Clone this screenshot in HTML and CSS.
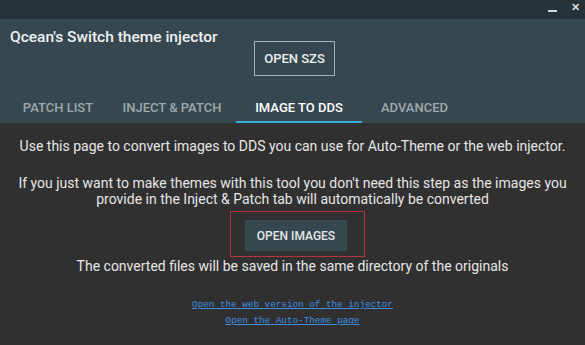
FILE: index.html
```html
<!DOCTYPE html>
<html lang="en">
<head>
    <meta charset="UTF-8">
    <title>Qcean's Switch theme injector</title>
    <link rel="stylesheet" href="styles.css">
</head>
<body>
    <div class="app">
        <div class="titlebar">
            <span class="win-btn minimize"></span>
            <span class="win-btn close">&#10005;</span>
        </div>

        <header class="header">
            <div class="top-row">
                <h1 class="app-title">Qcean's Switch theme injector</h1>
                <button class="outline-btn">OPEN SZS</button>
            </div>
            <nav class="tabs">
                <div class="tab">PATCH LIST</div>
                <div class="tab">INJECT &amp; PATCH</div>
                <div class="tab active">IMAGE TO DDS</div>
                <div class="tab">ADVANCED</div>
            </nav>
        </header>

        <main class="content">
            <p class="intro">Use this page to convert images to DDS you can use for Auto-Theme or the web injector.</p>
            <p class="note">If you just want to make themes with this tool you don't need this step as the images you provide in the Inject &amp; Patch tab will automatically be converted</p>
            <div class="highlight">
                <button class="flat-btn">OPEN IMAGES</button>
            </div>
            <p class="saved">The converted files will be saved in the same directory of the originals</p>
            <div class="links">
                <a href="#">Open the web version of the injector</a>
                <a href="#">Open the Auto-Theme page</a>
            </div>
        </main>
    </div>
</body>
</html>
```

FILE: styles.css
```css
* {
    margin: 0;
    padding: 0;
    box-sizing: border-box;
}

body {
    font-family: Roboto, 'Liberation Sans', sans-serif;
    background: #303030;
    width: 585px;
    height: 345px;
    overflow: hidden;
}

.app {
    display: flex;
    flex-direction: column;
    height: 345px;
}

.titlebar {
    height: 19px;
    background: #263238;
    display: flex;
    justify-content: flex-end;
    align-items: center;
    padding-right: 5px;
    gap: 14px;
    color: #cfd8dc;
}

.win-btn.minimize {
    width: 9px;
    height: 2px;
    margin-top: 3px;
    background: #cfd8dc;
}

.win-btn.close {
    font-size: 11px;
    font-weight: bold;
    line-height: 12px;
    margin-top: -4px;
}

.header {
    background: #37474f;
    padding: 8px 0 0 10px;
}

.top-row {
    display: flex;
    align-items: flex-start;
    height: 68px;
}

.app-title {
    width: 244px;
    font-size: 15.5px;
    font-weight: 500;
    line-height: 20px;
    color: #eef1f2;
}

.outline-btn {
    margin-top: 14px;
    width: 81px;
    height: 35px;
    background: transparent;
    border: 1px solid #a5afb4;
    color: #eceff1;
    font-family: inherit;
    font-size: 13px;
    font-weight: 500;
}

.tabs {
    display: grid;
    grid-template-columns: 100px 128px 126px 105px;
    margin-left: -2px;
}

.tab {
    height: 28px;
    text-align: center;
    font-size: 13px;
    font-weight: 500;
    line-height: 26px;
    color: #9ea8ad;
    border-bottom: 2px solid transparent;
}

.tab.active {
    color: #ffffff;
    border-bottom-color: #3ea7dc;
}

.content {
    flex: 1;
    text-align: center;
    color: #e6e6e6;
    font-size: 14px;
    line-height: 16px;
    padding: 15px 10px 0;
}

.note {
    margin: 21px 0 4px;
}

.highlight {
    display: flex;
    width: 135px;
    margin-left: 220px;
    border: 1px solid #b3343a;
    padding: 8px 17px 5px 14px;
}

.flat-btn {
    width: 102px;
    height: 31px;
    background: #37474f;
    border: none;
    color: #e3e7e9;
    font-family: inherit;
    font-size: 12px;
    font-weight: 500;
}

.saved {
    margin-top: 1px;
}

.links {
    margin-top: 24px;
    display: flex;
    flex-direction: column;
    align-items: center;
    gap: 3px;
}

.links a {
    font-family: 'Liberation Mono', monospace;
    font-size: 9.3px;
    line-height: 13px;
    color: #3f8ee0;
}
```
